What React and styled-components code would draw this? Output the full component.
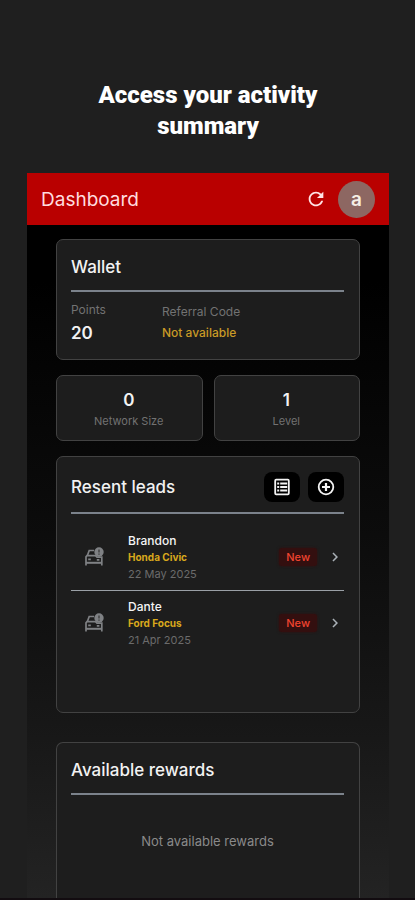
import React from 'react';
import styled, { createGlobalStyle } from 'styled-components';
import { MdRefresh, MdChevronRight } from 'react-icons/md';

const leads = [
  { id: 1, name: 'Brandon', car: 'Honda Civic', date: '22 May 2025', status: 'New' },
  { id: 2, name: 'Dante', car: 'Ford Focus', date: '21 Apr 2025', status: 'New' }
];

const stats = [
  { label: 'Network Size', value: 0 },
  { label: 'Level', value: 1 }
];

function CarIcon () {
  return (
    <svg width='20' height='20' viewBox='0 0 20 20' fill='none' aria-hidden='true'>
      <path d='M10 3.5H5.2L3.4 8.5' stroke='#7f8184' strokeWidth='1.7' />
      <path d='M2 18.5V9.8L3 8.6h8.5l1.5 1.6h4.8v8.3' stroke='#7f8184' strokeWidth='1.7' />
      <path d='M2 15.8h15.8' stroke='#7f8184' strokeWidth='2' />
      <path d='M4.2 12.4h2.6M12.8 12.8h2.6' stroke='#7f8184' strokeWidth='1.8' />
      <circle cx='15' cy='5' r='4.7' fill='#7f8184' />
      <path d='M15 2.4v3.2M15 6.6v1.2' stroke='#3a3a3a' strokeWidth='1.3' />
    </svg>
  );
}

function ListIcon () {
  return (
    <svg width='18' height='18' viewBox='0 0 18 18' fill='none' stroke='#f4f4f4' aria-hidden='true'>
      <rect x='2.2' y='1.7' width='13.6' height='14.6' rx='1' strokeWidth='1.8' />
      <path d='M4.2 5.4h2M4.2 9h2M4.2 12.6h2' strokeWidth='2' />
      <path d='M7.2 5.4h7M7.2 9h7M7.2 12.6h7' strokeWidth='2' />
    </svg>
  );
}

function PlusIcon () {
  return (
    <svg width='18' height='18' viewBox='0 0 18 18' fill='none' stroke='#f4f4f4' aria-hidden='true'>
      <circle cx='9' cy='9' r='7.3' strokeWidth='1.8' />
      <path d='M9 5v8M5 9h8' strokeWidth='2.2' />
    </svg>
  );
}

function App () {
  return (
    <>
      <GlobalStyle />
      <Page>
        <Headline>Access your activity summary</Headline>

        <Phone>
          <TopBar>
            <BarTitle>Dashboard</BarTitle>
            <RefreshButton aria-label='Refresh'><MdRefresh size={22} /></RefreshButton>
            <Avatar>a</Avatar>
          </TopBar>

          <Content>
            <Card>
              <CardHead><CardTitle>Wallet</CardTitle></CardHead>
              <WalletBody>
                <WalletItem>
                  <WalletCaption>Points</WalletCaption>
                  <Points>20</Points>
                </WalletItem>
                <WalletItem>
                  <WalletCaption>Referral Code</WalletCaption>
                  <ReferralCode>Not available</ReferralCode>
                </WalletItem>
              </WalletBody>
            </Card>

            <Stats>
              {stats.map(({ label, value }) => (
                <StatCard key={label}>
                  <StatValue>{value}</StatValue>
                  <Caption>{label}</Caption>
                </StatCard>
              ))}
            </Stats>

            <Card $minHeight={257}>
              <CardHead $tall>
                <CardTitle>Resent leads</CardTitle>
                <HeadButton aria-label='All leads'><ListIcon /></HeadButton>
                <HeadButton aria-label='Add lead'><PlusIcon /></HeadButton>
              </CardHead>
              <LeadList>
                {leads.map((lead) => (
                  <LeadItem key={lead.id}>
                    <LeadButton>
                      <CarIcon />
                      <LeadText>
                        <LeadName>{lead.name}</LeadName>
                        <LeadCar>{lead.car}</LeadCar>
                        <LeadDate>{lead.date}</LeadDate>
                      </LeadText>
                      <Status>{lead.status}</Status>
                      <MdChevronRight size={18} />
                    </LeadButton>
                  </LeadItem>
                ))}
              </LeadList>
            </Card>

            <RewardsCard>
              <CardHead><CardTitle>Available rewards</CardTitle></CardHead>
              <Empty>Not available rewards</Empty>
            </RewardsCard>
          </Content>
        </Phone>
      </Page>
    </>
  );
}

export default App;

const GlobalStyle = createGlobalStyle`
  * {
    box-sizing: border-box;
  }
  body {
    margin: 0;
    background: #1f1f1f;
    font-family: Inter, 'Liberation Sans', sans-serif;
    color: #f2f2f2;
  }
  h1, h2, p, ul {
    margin: 0;
    padding: 0;
  }
  button {
    border: 0;
    padding: 0;
    background: none;
    font: inherit;
    color: inherit;
    cursor: pointer;
  }
`;

const Page = styled.main`
  display: flex;
  flex-direction: column;
  height: 100vh;
  overflow: hidden;
  padding: 80px 26px 0 27px;
  border-bottom: 2px solid #120c10;
`;

const Headline = styled.h1`
  max-width: 260px;
  margin: 0 auto 31px;
  text-align: center;
  font-family: Roboto, 'Open Sans', sans-serif;
  font-size: 24px;
  font-weight: 900;
  line-height: 31px;
  color: #fff;
`;

const Phone = styled.div`
  flex: 1;
  display: flex;
  flex-direction: column;
  min-height: 0;
  background: linear-gradient(#000 15%, #0c0c0c 50%, #181818 78%, #232323);
`;

const TopBar = styled.header`
  display: flex;
  align-items: center;
  height: 52px;
  flex-shrink: 0;
  padding: 0 14px;
  background: #b90000;
`;

const BarTitle = styled.h2`
  flex: 1;
  font-size: 19px;
  font-weight: 400;
  color: #ffdcdf;
`;

const RefreshButton = styled.button`
  display: flex;
  margin-right: 11px;
  color: #ffe3e5;
`;

const Avatar = styled.div`
  width: 37px;
  height: 37px;
  border-radius: 50%;
  background: #8d6762;
  text-align: center;
  font-size: 19px;
  font-weight: 600;
  line-height: 37px;
  color: #f6efe6;
`;

const Content = styled.div`
  flex: 1;
  display: flex;
  flex-direction: column;
  gap: 15px;
  min-height: 0;
  padding: 14px 29px 0;
`;

const Card = styled.section`
  flex-shrink: 0;
  min-height: ${props => props.$minHeight || 121}px;
  padding: 0 15px 0 14px;
  border: 1px solid #424242;
  border-radius: 7px;
  background: #1d1d1d;
`;

const RewardsCard = styled(Card)`
  flex: 1;
  margin-top: 14px;
  border-bottom: 0;
  border-radius: 7px 7px 0 0;
`;

const CardHead = styled.div`
  display: flex;
  align-items: center;
  gap: 8px;
  height: ${props => props.$tall ? 57 : 52}px;
  border-bottom: 2px solid #7b828b;
  padding-top: 4px;
`;

const CardTitle = styled.h2`
  flex: 1;
  font-size: 17px;
  font-weight: 500;
  line-height: 24px;
`;

const HeadButton = styled.button`
  display: flex;
  align-items: center;
  justify-content: center;
  width: 36px;
  height: 30px;
  border-radius: 8px;
  background: #000;
`;

const WalletBody = styled.div`
  display: grid;
  grid-template-columns: 1fr 2fr;
  align-items: center;
  padding-top: 9px;
`;

const WalletItem = styled.div`
  display: flex;
  flex-direction: column;
`;

const Caption = styled.span`
  font-size: 11px;
  line-height: 18px;
  color: #727272;
`;

const WalletCaption = styled(Caption)`
  font-size: 12px;
`;

const Points = styled.strong`
  font-size: 17px;
  font-weight: 600;
  line-height: 28px;
`;

const ReferralCode = styled.span`
  font-size: 12px;
  font-weight: 500;
  line-height: 24px;
  color: #c99a26;
`;

const Stats = styled.div`
  display: grid;
  grid-template-columns: 1fr 1fr;
  gap: 11px;
`;

const StatCard = styled(Card)`
  display: flex;
  flex-direction: column;
  align-items: center;
  min-height: 66px;
  padding-top: 12px;
`;

const StatValue = styled.strong`
  font-size: 17px;
  font-weight: 600;
  line-height: 24px;
`;

const LeadList = styled.ul`
  list-style: none;
  padding-top: 11px;
`;

const LeadItem = styled.li`
  & + & {
    border-top: 1px solid #9aa0a6;
  }
`;

const LeadButton = styled.button`
  display: flex;
  align-items: center;
  width: 100%;
  padding: 5px 0 7px 13px;
  text-align: left;
  color: #a9b0b6;
`;

const LeadText = styled.span`
  flex: 1;
  display: flex;
  flex-direction: column;
  margin-left: 24px;
  padding-top: 2px;
  line-height: 17px;
`;

const LeadName = styled.span`
  font-size: 12px;
  font-weight: 500;
  color: #f5f5f5;
`;

const LeadCar = styled.span`
  font-size: 10px;
  font-weight: 700;
  color: #d9a91c;
`;

const LeadDate = styled.span`
  font-size: 11px;
  color: #6b6b6b;
`;

const Status = styled.span`
  margin-right: 9px;
  padding: 0 7px;
  border-radius: 3px;
  background: #330f0f;
  box-shadow: 0 0 3px #330f0f;
  font-size: 11px;
  font-weight: 500;
  line-height: 18px;
  color: #f0442f;
`;

const Empty = styled.p`
  padding-top: 36px;
  text-align: center;
  font-size: 13px;
  line-height: 20px;
  color: #8a8a8a;
`;
